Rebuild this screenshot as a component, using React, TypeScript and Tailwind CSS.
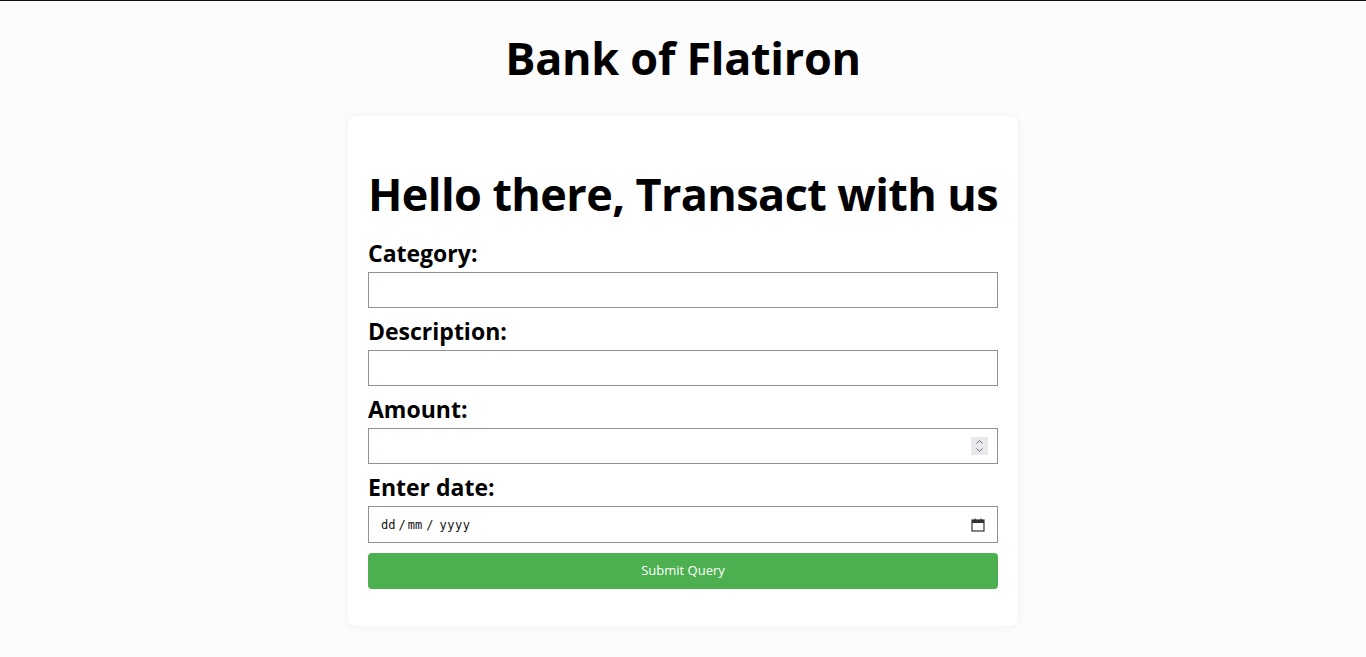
export default function App() {
  const fields = [
    { label: 'Category:', kind: 'text' },
    { label: 'Description:', kind: 'text' },
    { label: 'Amount:', kind: 'number' },
  ];

  return (
    <div className="min-h-screen bg-[#fcfcfc] border-t border-[#111111] font-['Open_Sans',sans-serif] text-black">
      <h1 className="mt-[29px] text-center text-[45px] leading-[56px] font-bold tracking-[-0.3px]">Bank of Flatiron</h1>

      <div className="mx-auto mt-[30px] w-[670px] rounded-lg bg-white px-5 pt-[50px] pb-[37px] shadow-[0_0_8px_rgba(0,0,0,0.06)]">
        <h2 className="text-[45px] leading-[56px] font-bold tracking-[-0.6px] whitespace-nowrap">Hello there, Transact with us</h2>

        <form className="flex flex-col" onSubmit={(e) => e.preventDefault()}>
          {fields.map((f, i) => (
            <div key={i} className="flex flex-col">
              <label className={`${i === 0 ? 'mt-[17px]' : 'mt-[9px]'} text-[23px] leading-[28px] font-bold`}>{f.label}</label>
              <div className="relative mt-[5px] h-9 w-full border border-[#8f8f9d] bg-white">
                {f.kind === 'number' && (
                  <div className="absolute right-[9px] top-[8px] flex h-[18px] w-[17px] flex-col items-center justify-center bg-[#e9e9ed]">
                    <svg width="9" height="14" viewBox="0 0 9 14" fill="none" stroke="#6b6b75" strokeWidth="1">
                      <path d="M1.5 4.5 L4.5 1.5 L7.5 4.5" />
                      <path d="M1.5 9.5 L4.5 12.5 L7.5 9.5" />
                    </svg>
                  </div>
                )}
              </div>
            </div>
          ))}

          <label className="mt-[9px] text-[23px] leading-[28px] font-bold">Enter date:</label>
          <div className="mt-[5px] flex h-[37px] w-full items-center justify-between border border-[#8f8f9d] bg-white pl-3 pr-[12px]">
            <div className="flex items-center font-['DejaVu_Sans_Mono',monospace] text-[12px] text-[#111]">
              <span>dd</span>
              <span className="ml-[3px] mr-[2px]">/</span>
              <span>mm</span>
              <span className="ml-[4px] mr-[6px]">/</span>
              <span className="tracking-[0.6px]">yyyy</span>
            </div>
            <svg width="14" height="14" viewBox="0 0 14 14" fill="#333">
              <rect x="1" y="2" width="12" height="11" fill="none" stroke="#333" strokeWidth="1.2" />
              <rect x="1" y="2" width="12" height="3" />
              <rect x="3.5" y="0.5" width="1.2" height="2.5" />
              <rect x="9.3" y="0.5" width="1.2" height="2.5" />
            </svg>
          </div>

          <button type="submit" className="mt-[10px] h-9 w-full rounded bg-[#4caf50] text-[13px] text-white">
            Submit Query
          </button>
        </form>
      </div>
    </div>
  );
}
